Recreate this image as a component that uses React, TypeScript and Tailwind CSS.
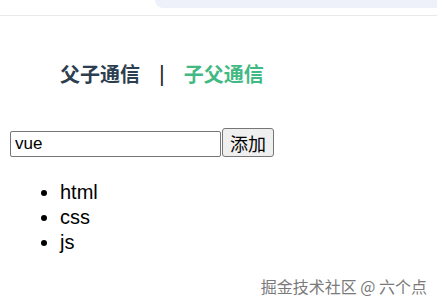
const App = () => {
  const items = ["html", "css", "js"];

  return (
    <div className="relative w-[437px] h-[307px] bg-white overflow-hidden font-['Liberation_Sans','Noto_Sans_CJK_SC',sans-serif] text-black">
      <div className="h-[16px] border-b border-[#e8e8ec] flex">
        <div className="ml-[155px] flex-1 h-[8px] bg-[#eef1fa] rounded-bl-[14px]" />
      </div>

      <nav className="pl-[60px] pt-[30px] flex items-center h-[85px] text-[20px] font-bold text-[#2c3e50]">
        <span className="font-['Noto_Sans_CJK_SC',sans-serif] leading-none">父子通信</span>
        <span className="mx-[19px] text-[#2c2c2c] font-normal text-[22px] leading-none">|</span>
        <span className="font-['Noto_Sans_CJK_SC',sans-serif] leading-none text-[#42b983]">子父通信</span>
      </nav>

      <div className="mt-[27px] ml-[10px] flex items-end">
        <input
          defaultValue="vue"
          className="w-[211px] h-[26px] border border-[#767676] rounded-[2px] px-[4px] text-[17px] outline-none"
        />
        <button className="ml-[1px] w-[52px] h-[29px] border border-[#767676] rounded-[3px] bg-[#efefef] text-[18px] font-['Noto_Sans_CJK_SC',sans-serif] leading-none">
          添加
        </button>
      </div>

      <ul className="mt-[23px] pl-[60px] list-disc text-[20px] leading-[25px]">
        {items.map((item) => (
          <li key={item}>{item}</li>
        ))}
      </ul>

      <div className="absolute right-[10px] bottom-[9px] text-[16px] text-[#7a7a7a] font-['Noto_Sans_CJK_SC',sans-serif] [text-shadow:0_0_2px_#ffffff]">
        掘金技术社区 @ 六个点
      </div>
    </div>
  );
};

export default App;
